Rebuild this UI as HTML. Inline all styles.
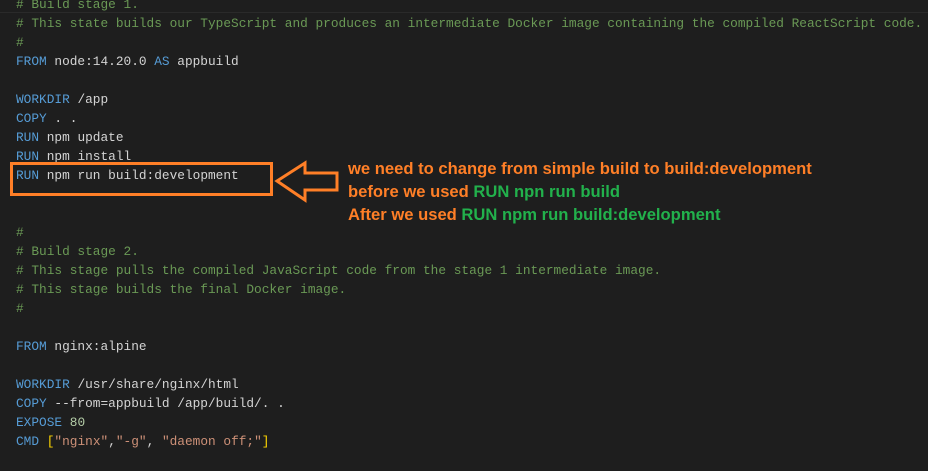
<!DOCTYPE html>
<html><head><meta charset="utf-8"><style>
body{margin:0;width:928px;height:471px;background:#1e1e1e;overflow:hidden;position:relative}
pre{margin:0;position:absolute;left:16px;top:-5px;font-family:"Liberation Mono",monospace;font-size:12.8px;line-height:19px;color:#d4d4d4}
.c{color:#6a9955}.k{color:#569cd6}.s{color:#ce9178}.n{color:#b5cea8}.b{color:#ffd700}
.hl{position:absolute;left:0;top:12px;width:928px;height:0;border-top:1px solid #2a2a2a}
.box{position:absolute;left:10px;top:162px;width:257px;height:28px;border:3px solid #ff7f27}
.ann{position:absolute;left:348px;font-family:"Liberation Sans",sans-serif;font-weight:bold;font-size:16.6px;color:#ff7f27;white-space:nowrap}
.g{color:#22b14c}
</style></head><body>
<div class="hl"></div>
<pre><span class="c"># Build stage 1.</span>
<span class="c"># This state builds our TypeScript and produces an intermediate Docker image containing the compiled ReactScript code.</span>
<span class="c">#</span>
<span class="k">FROM</span> node:14.20.0 <span class="k">AS</span> appbuild

<span class="k">WORKDIR</span> /app
<span class="k">COPY</span> . .
<span class="k">RUN</span> npm update
<span class="k">RUN</span> npm install
<span class="k">RUN</span> npm run build:development


<span class="c">#</span>
<span class="c"># Build stage 2.</span>
<span class="c"># This stage pulls the compiled JavaScript code from the stage 1 intermediate image.</span>
<span class="c"># This stage builds the final Docker image.</span>
<span class="c">#</span>

<span class="k">FROM</span> nginx:alpine

<span class="k">WORKDIR</span> /usr/share/nginx/html
<span class="k">COPY</span> --from=appbuild /app/build/. .
<span class="k">EXPOSE</span> <span class="n">80</span>
<span class="k">CMD</span> <span class="b">[</span><span class="s">"nginx"</span>,<span class="s">"-g"</span>, <span class="s">"daemon off;"</span><span class="b">]</span></pre>
<div class="box"></div>
<svg style="position:absolute;left:0;top:0" width="928" height="471"><polygon points="277,181 305,163 305,173 337,173 337,190 305,190 305,200" fill="none" stroke="#ff7f27" stroke-width="3"/></svg>
<div class="ann" style="top:159px">we need to change from simple build to build:development</div>
<div class="ann" style="top:182px">before we used <span class="g">RUN npn run build</span></div>
<div class="ann" style="top:205px">After we used <span class="g">RUN npm run build:development</span></div>
</body></html>
